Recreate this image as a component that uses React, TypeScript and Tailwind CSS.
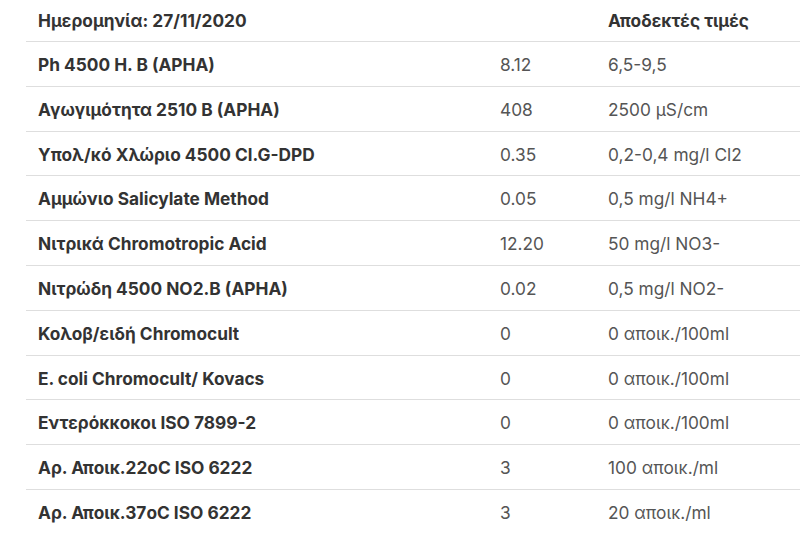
const rows: [string, string, string][] = [
  ["Ph 4500 H. B (APHA)", "8.12", "6,5-9,5"],
  ["Αγωγιμότητα 2510 B (APHA)", "408", "2500 µS/cm"],
  ["Υπολ/κό Χλώριο 4500 Cl.G-DPD", "0.35", "0,2-0,4 mg/l Cl2"],
  ["Αμμώνιο Salicylate Method", "0.05", "0,5 mg/l NH4+"],
  ["Νιτρικά Chromotropic Acid", "12.20", "50 mg/l NO3-"],
  ["Νιτρώδη 4500 NO2.B (APHA)", "0.02", "0,5 mg/l NO2-"],
  ["Κολοβ/ειδή Chromocult", "0", "0 αποικ./100ml"],
  ["E. coli Chromocult/ Kovacs", "0", "0 αποικ./100ml"],
  ["Εντερόκκοκοι ISO 7899-2", "0", "0 αποικ./100ml"],
  ["Αρ. Αποικ.22oC ISO 6222", "3", "100 αποικ./ml"],
  ["Αρ. Αποικ.37oC ISO 6222", "3", "20 αποικ./ml"],
];

export default function App() {
  return (
    <div className="w-[800px] h-[545px] overflow-hidden bg-white font-['Inter',sans-serif] text-[17.3px]">
      <div className="ml-[26px] w-[774px]">
        <div className="grid grid-cols-[462px_108px_1fr] h-[41px] items-center font-bold text-[#333]">
          <div className="px-3">Ημερομηνία: 27/11/2020</div>
          <div className="px-3"></div>
          <div className="px-3">Αποδεκτές τιμές</div>
        </div>
        {rows.map((r, i) => (
          <div
            key={i}
            className="grid grid-cols-[462px_108px_1fr] h-[44.8px] pt-[2px] items-center border-t border-[#dedede]"
          >
            <div className="px-3 font-bold text-[#333]">{r[0]}</div>
            <div className="px-3 text-[#555]">{r[1]}</div>
            <div className="px-3 text-[#555]">{r[2]}</div>
          </div>
        ))}
      </div>
    </div>
  );
}
